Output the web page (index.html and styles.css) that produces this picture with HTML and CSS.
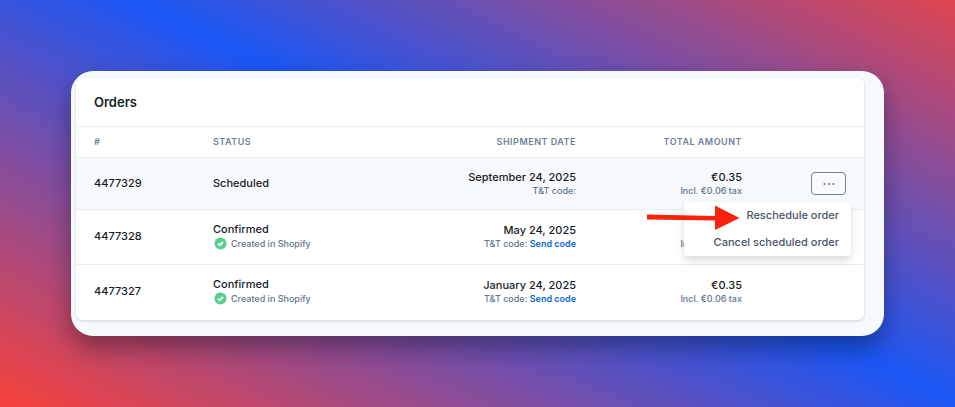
FILE: index.html
```
<!DOCTYPE html>
<html lang="en">

<head>
    <meta charset="UTF-8">
    <meta name="viewport" content="width=device-width, initial-scale=1.0">
    <title>Orders</title>
    <link rel="stylesheet" href="styles.css">
</head>

<body>
    <main class="panel">
        <section class="card">
            <h1>Orders</h1>
            <table class="orders">
                <thead>
                    <tr>
                        <th class="col-id">#</th>
                        <th class="col-status">Status</th>
                        <th class="col-date">Shipment date</th>
                        <th class="col-total">Total amount</th>
                        <th class="col-actions"></th>
                    </tr>
                </thead>
                <tbody>
                    <tr class="active">
                        <td>4477329</td>
                        <td>Scheduled</td>
                        <td class="right">September 24, 2025
                            <div class="sub">T&amp;T code:</div>
                        </td>
                        <td class="right">€0.35
                            <div class="sub">Incl. €0.06 tax</div>
                        </td>
                        <td class="right">
                            <div class="actions">
                                <button type="button" class="more" aria-label="Order actions">
                                    <svg width="12" height="4" viewBox="0 0 12 4" fill="currentColor">
                                        <circle cx="1.5" cy="2" r="1" />
                                        <circle cx="6" cy="2" r="1" />
                                        <circle cx="10.5" cy="2" r="1" />
                                    </svg>
                                </button>
                                <div class="menu">
                                    <button type="button">Reschedule order</button>
                                    <button type="button">Cancel scheduled order</button>
                                    <svg class="arrow" width="94" height="28" viewBox="0 0 94 28" fill="#fb220b">
                                        <path d="M1 11.5 69 13V2.5L93.500 15 69 27V17.500L1 16.500Z" />
                                    </svg>
                                </div>
                            </div>
                        </td>
                    </tr>
                    <tr>
                        <td>4477328</td>
                        <td>Confirmed
                            <div class="sub synced">
                                <svg width="13" height="13" viewBox="0 0 13 13">
                                    <circle cx="6.5" cy="6.5" r="6" fill="#56cf8c" />
                                    <path d="M4 6.8 5.7 8.2 9 5" fill="none" stroke="#fff" stroke-width="1.8" />
                                </svg>
                                Created in Shopify
                            </div>
                        </td>
                        <td class="right">May 24, 2025
                            <div class="sub">T&amp;T code: <a href="#">Send code</a></div>
                        </td>
                        <td class="right">€0.35
                            <div class="sub">Incl. €0.06 tax</div>
                        </td>
                        <td></td>
                    </tr>
                    <tr>
                        <td>4477327</td>
                        <td>Confirmed
                            <div class="sub synced">
                                <svg width="13" height="13" viewBox="0 0 13 13">
                                    <circle cx="6.5" cy="6.5" r="6" fill="#56cf8c" />
                                    <path d="M4 6.8 5.7 8.2 9 5" fill="none" stroke="#fff" stroke-width="1.8" />
                                </svg>
                                Created in Shopify
                            </div>
                        </td>
                        <td class="right">January 24, 2025
                            <div class="sub">T&amp;T code: <a href="#">Send code</a></div>
                        </td>
                        <td class="right">€0.35
                            <div class="sub">Incl. €0.06 tax</div>
                        </td>
                        <td></td>
                    </tr>
                </tbody>
            </table>
        </section>
    </main>
</body>

</html>
```
FILE: styles.css
```
* {
    box-sizing: border-box;
}

body {
    font-family: Inter, 'Liberation Sans', sans-serif;
    font-size: 11px;
    font-weight: 500;
    line-height: 15px;
    color: #161b26;
    background: linear-gradient(26deg, #f9423a 0%, #1b57f5 54%, #e0454f 100%);
    margin: 0;
    padding: 71px;
    min-height: 100vh;
}

.panel {
    background-color: #f6fafd;
    border-radius: 22px;
    padding: 7px 20px 16px 5px;
    box-shadow: 0 12px 24px rgba(0, 0, 0, 0.35);
}

.card {
    background-color: white;
    border-radius: 6px;
    box-shadow: 0 1px 3px rgba(30, 50, 70, 0.2);
}

h1 {
    margin: 0;
    padding: 14px 18px;
    font-size: 13px;
    font-weight: 600;
    line-height: 20px;
}

.orders {
    width: 100%;
    table-layout: fixed;
    border-collapse: collapse;
}

th,
td {
    padding: 0 18px;
    text-align: left;
    border-top: 1px solid #e9edf1;
}

th {
    height: 31px;
    padding-bottom: 2px;
    font-size: 9px;
    font-weight: 600;
    letter-spacing: 0.5px;
    text-transform: uppercase;
    color: #718096;
}

td {
    height: 55px;
    padding-bottom: 2px;
}

.active td {
    height: 52px;
    padding-bottom: 0;
    background-color: #f6fafd;
}

.col-id {
    width: 119px;
}

.col-date {
    width: 192px;
    text-align: right;
}

.col-total {
    width: 166px;
    text-align: right;
}

.col-actions {
    width: 104px;
}

.right {
    text-align: right;
}

.sub {
    font-size: 9px;
    font-weight: 500;
    line-height: 12px;
    color: #64748b;
}

.sub a {
    color: #0967d8;
    font-weight: 600;
    text-decoration: none;
}

.synced {
    display: flex;
    align-items: center;
    gap: 4px;
    padding-left: 1px;
}

.actions {
    position: relative;
}

.more {
    display: inline-flex;
    align-items: center;
    justify-content: center;
    width: 35px;
    height: 23px;
    padding: 0;
    color: #5f6c80;
    background-color: #f8fafc;
    border: 1px solid #718096;
    border-radius: 4px;
    vertical-align: middle;
}

/* dropdown opened from the row button */
.menu {
    position: absolute;
    top: 30px;
    right: -5px;
    width: 167px;
    background-color: white;
    border-radius: 4px;
    box-shadow: 0 4px 8px rgba(0, 0, 0, 0.15);
}

.menu button {
    display: block;
    width: 100%;
    height: 27px;
    padding: 0 12px;
    font: inherit;
    text-align: right;
    color: #4a5568;
    background: none;
    border: none;
}

.arrow {
    position: absolute;
    top: 1px;
    left: -38px;
}
```
